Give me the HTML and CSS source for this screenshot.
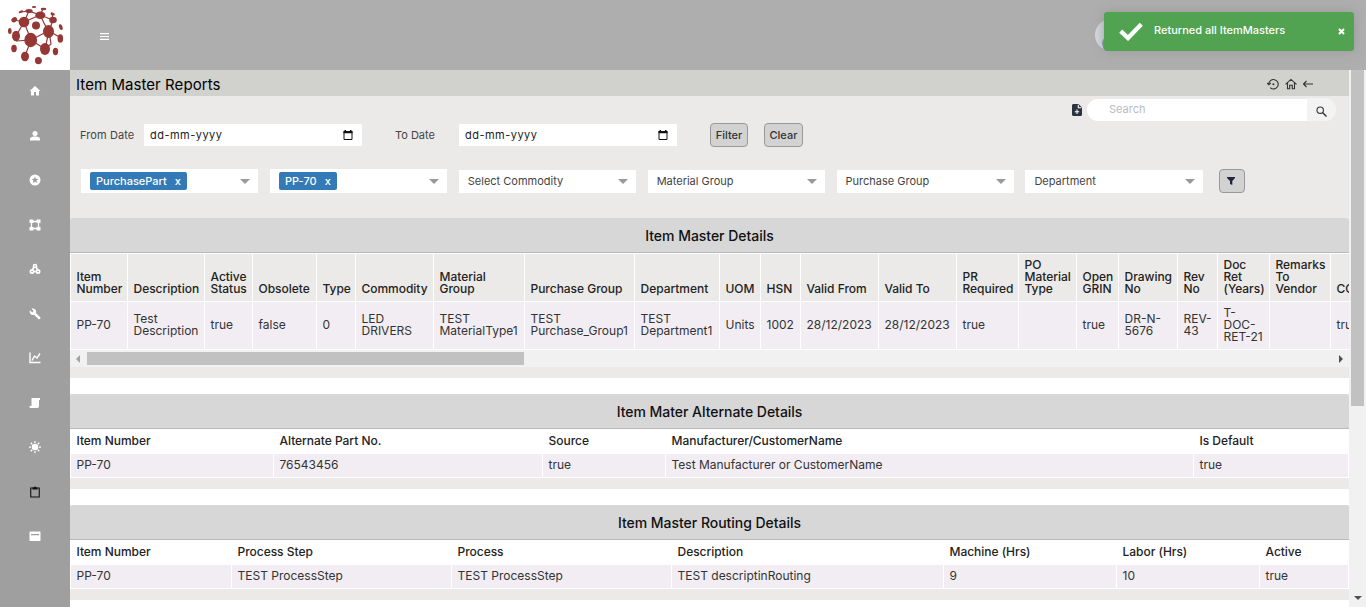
FILE: index.html
```html
<!DOCTYPE html>
<html lang="en">
<head>
<meta charset="utf-8">
<title>Item Master Reports</title>
<link rel="stylesheet" href="styles.css">
</head>
<body>
<header class="topbar">
  <div class="logo">
    <svg width="70" height="70" viewBox="0 0 70 70">
      <g stroke="#953735" stroke-width="1.2" fill="none">
        <path d="M24 22 31 40 48 31 40 15 24 22M24 22 16 36M16 41 31 40 45 49 49 31 53 20 40 15M29 11 40 15 43 9M24 22 14 20M31 40 25 56M49 31 61 38M53 20 52 14M24 22 29 11 21 12M45 49 51 44 49 31"/>
      </g>
      <g fill="#953735">
        <ellipse cx="24" cy="22" rx="5.3" ry="5.3"/><ellipse cx="40.3" cy="15.2" rx="5" ry="3.8"/><circle cx="36" cy="25.5" r="4"/>
        <ellipse cx="48.5" cy="31.5" rx="5.5" ry="6.4"/><ellipse cx="30.7" cy="40" rx="6.4" ry="7.2"/><ellipse cx="53" cy="20" rx="3.8" ry="3.3"/>
        <ellipse cx="16" cy="36" rx="4" ry="5.3"/><ellipse cx="45" cy="49" rx="5" ry="6"/><ellipse cx="25" cy="56.5" rx="4" ry="4.8"/>
        <ellipse cx="38.4" cy="60.6" rx="3.5" ry="3.7"/><ellipse cx="55.5" cy="51.5" rx="2.7" ry="3.7"/><ellipse cx="60.3" cy="38.5" rx="2.8" ry="4.3"/>
        <ellipse cx="14" cy="48.5" rx="2.8" ry="3.7"/><ellipse cx="9.8" cy="31" rx="1.8" ry="2.9"/><ellipse cx="14.3" cy="20" rx="3" ry="2.4" transform="rotate(-35 14 20)"/>
        <ellipse cx="29" cy="11" rx="3.7" ry="2.1"/><ellipse cx="21" cy="11.7" rx="2.4" ry="1.2" transform="rotate(-25 21 12)"/><ellipse cx="34" cy="7" rx="2.2" ry="1"/>
        <ellipse cx="43.5" cy="9" rx="2.8" ry="1.3"/><ellipse cx="52.6" cy="13.7" rx="2.3" ry="1.3" transform="rotate(25 52 14)"/><ellipse cx="60.8" cy="27" rx="1.7" ry="3" transform="rotate(-20 61 27)"/>
      </g>
    </svg>
  </div>
  <svg class="burger" width="9" height="7" viewBox="0 0 9 7"><path d="M0 .6h9M0 3.5h9M0 6.400h9" stroke="#fff" stroke-width="1.200"/></svg>
  <div class="avatar"><svg width="32" height="32" viewBox="0 0 32 32"><path d="M7 24Q8 17 16 17V32H9" fill="#5f7fc0"/></svg></div>
</header>
<div class="toast">
  <svg class="tick" width="24" height="19" viewBox="0 0 24 19"><path d="M1.7 9.2 9 16 22.3 2.3" fill="none" stroke="#fff" stroke-width="4.4"/></svg>
  <span class="toast-text">Returned all ItemMasters</span>
  <svg class="toast-x" width="7" height="7" viewBox="0 0 7 7"><path d="M1 1 6 6M6 1 1 6" stroke="#fff" stroke-width="2"/></svg>
</div>
<div class="shell">
  <nav class="side">
    <span><svg viewBox="0 0 24 24"><path d="M10 21v-7h4v7h6v-9h3L12 2 1 12h3v9z"/></svg></span>
    <span><svg viewBox="0 0 24 24"><circle cx="12" cy="7" r="5"/><path d="M2 21v-3c0-4 6-5 10-5s10 1 10 5v3z"/></svg></span>
    <span><svg viewBox="0 0 24 24"><path fill-rule="evenodd" d="M12 1a11 11 0 1 0 0 22 11 11 0 0 0 0-22zm4.2 17L12 15.400 7.800 18l1.100-4.800-3.700-3.200 4.900-.4L12 5l1.900 4.600 4.900.4-3.700 3.200z"/></svg></span>
    <span><svg viewBox="0 0 24 24"><path d="M5 5h14v14H5z" fill="none" stroke="#fff" stroke-width="2.6"/><path d="M1 1h8v7H1zM15 1h8v7h-8zM1 16h8v7H1zM15 16h8v7h-8z"/></svg></span>
    <span><svg viewBox="0 0 24 24"><g fill="none" stroke="#fff" stroke-width="3.400"><circle cx="12" cy="6" r="3"/><circle cx="6" cy="17" r="3.300"/><circle cx="18" cy="17" r="3.300"/><path d="M10 8 7 13M14 8l3 5M10 17h4"/></g></svg></span>
    <span><svg viewBox="0 0 24 24"><path d="m23 19-9.100-9.100c.9-2.300.4-5-1.500-6.900-2-2-5-2.400-7.400-1.300L9.300 6l-3 3L1.900 4.700C.7 7.100 1.200 10.100 3.200 12.100c1.900 1.900 4.600 2.400 6.900 1.500l9.100 9.100c.4.400 1 .4 1.400 0l2.300-2.300c.5-.4.5-1.100.1-1.400z"/></svg></span>
    <span><svg viewBox="0 0 24 24"><path d="M2 1v20h21M6 17l5-9 5 4 6-9" fill="none" stroke="#fff" stroke-width="2.800"/></svg></span>
    <span><svg viewBox="0 0 24 24"><path d="M5 2h17v4h-2v13a4 4 0 0 1-4 3H4a3 3 0 0 1-3-4h4z"/></svg></span>
    <span><svg viewBox="0 0 24 24"><circle cx="12" cy="12" r="6.500"/><path d="M12 0v4M12 20v4M0 12h4M20 12h4M3.500 3.500l3 3M17.500 17.500l3 3M20.500 3.500l-3 3M6.500 17.500l-3 3" stroke="#fff" stroke-width="2.500"/></svg></span>
    <span><svg viewBox="0 0 24 24"><path d="M3.500 4h17v18h-17z" fill="none" stroke="#111" stroke-width="2.200"/><path d="M7 3h3l1-2h2l1 2h3v4H7z" fill="#111"/></svg></span>
    <span><svg viewBox="0 0 24 24"><path fill-rule="evenodd" d="M2 3h20l1 1v17l-1 1H2l-1-1V4zM4 8v2.500h16V8z"/></svg></span>
  </nav>
  <main class="main">
    <div class="titlebar">
      <h1>Item Master Reports</h1>
      <div class="tools">
        <svg width="12" height="12" viewBox="0 0 12 12"><path d="M1.800 6.500A4.700 4.700 0 1 1 3.200 9.600M0 5l1.800 1.800L3.800 5" fill="none" stroke="#333" stroke-width="1.100"/><circle cx="6.400" cy="6.200" r="1" fill="#333"/></svg>
        <svg width="12" height="12" viewBox="0 0 12 12"><path d="M.5 6.300 6 1.400l5.500 4.900M2.500 5v5.700h2.200V7.200h2.600v3.500h2.200V5" fill="none" stroke="#333" stroke-width="1.100"/></svg>
        <svg width="12" height="12" viewBox="0 0 12 12"><path d="M11 6H1.500M4.500 3l-3 3 3 3" fill="none" stroke="#333" stroke-width="1.100"/></svg>
      </div>
    </div>
    <section class="filters">
      <div class="searchrow">
        <svg class="addfile" width="10" height="12" viewBox="0 0 10 12"><path d="M1 0h5.500L10 3.500V11l-1 1H1l-1-1V1z" fill="#2b3340"/><path d="M6.300.8V3.800h3M5 5.500v4.500M2.800 7.700h4.400" fill="none" stroke="#fff" stroke-width="1.100"/></svg>
        <div class="search">Search</div>
        <div class="searchbtn"><svg width="11" height="11" viewBox="0 0 11 11"><circle cx="4.200" cy="4.200" r="3.200" fill="none" stroke="#333" stroke-width="1.100"/><path d="m6.500 6.500 4 4" stroke="#333" stroke-width="1.400"/></svg></div>
      </div>
      <div class="daterow">
        <label class="lbl-from">From Date</label>
        <div class="date"><span>dd-mm-yyyy</span><svg width="10" height="10" viewBox="0 0 10 10"><path d="M1 1.500h8v8H1z" fill="none" stroke="#111" stroke-width="1"/><path d="M.5 1h9v2.300h-9zM1.500 0h1.500v1H1.500zM7 0h1.500v1H7z" fill="#111"/></svg></div>
        <label class="lbl-to">To Date</label>
        <div class="date"><span>dd-mm-yyyy</span><svg width="10" height="10" viewBox="0 0 10 10"><path d="M1 1.500h8v8H1z" fill="none" stroke="#111" stroke-width="1"/><path d="M.5 1h9v2.300h-9zM1.500 0h1.500v1H1.500zM7 0h1.500v1H7z" fill="#111"/></svg></div>
        <button class="btn btn-filter">Filter</button>
        <button class="btn btn-clear">Clear</button>
      </div>
      <div class="selectrow">
        <div class="select tall"><span class="chip">PurchasePart<b>x</b></span><i></i></div>
        <div class="select tall"><span class="chip">PP-70<b>x</b></span><i></i></div>
        <div class="select"><span>Select Commodity</span><i></i></div>
        <div class="select"><span>Material Group</span><i></i></div>
        <div class="select"><span>Purchase Group</span><i></i></div>
        <div class="select"><span>Department</span><i></i></div>
        <button class="btn btn-funnel"><svg width="8" height="8" viewBox="0 0 8 8"><path d="M0 0h8v1L5.300 4v4L3 7V4L0 1z" fill="#22263a"/></svg></button>
      </div>
    </section>

    <section class="card">
      <h2>Item Master Details</h2>
      <div class="scroller">
        <table class="grid wide">
          <colgroup><col class="w56"><col class="w76"><col class="w47"><col class="w63"><col class="w38"><col class="w77"><col class="w90"><col class="w109"><col class="w84"><col class="w40"><col class="w39"><col class="w77"><col class="w77"><col class="w61"><col class="w57"><col class="w41"><col class="w58"><col class="w39"><col class="w51"><col class="w60"><col class="w80"></colgroup>
          <tr><th>Item Number</th><th>Description</th><th>Active Status</th><th>Obsolete</th><th>Type</th><th>Commodity</th><th>Material<br>Group</th><th>Purchase Group</th><th>Department</th><th>UOM</th><th>HSN</th><th>Valid From</th><th>Valid To</th><th>PR<br>Required</th><th>PO<br>Material<br>Type</th><th>Open<br>GRIN</th><th>Drawing<br>No</th><th>Rev<br>No</th><th>Doc<br>Ret<br>(Years)</th><th>Remarks<br>To<br>Vendor</th><th>COC</th></tr>
          <tr><td>PP-70</td><td>Test<br>Description</td><td>true</td><td>false</td><td>0</td><td>LED<br>DRIVERS</td><td>TEST<br>MaterialType1</td><td>TEST<br>Purchase_Group1</td><td>TEST<br>Department1</td><td>Units</td><td>1002</td><td>28/12/2023</td><td>28/12/2023</td><td>true</td><td></td><td>true</td><td>DR-N-<br>5676</td><td>REV-<br>43</td><td>T-<br>DOC-<br>RET-21</td><td></td><td>true</td></tr>
        </table>
      </div>
      <div class="hbar"><i class="arrow-l"></i><div class="hthumb"></div><i class="arrow-r"></i></div>
    </section>

    <section class="card spaced">
      <h2>Item Mater Alternate Details</h2>
      <table class="grid plain">
        <colgroup><col class="w202"><col class="w268"><col class="w122"><col class="w527"><col class="w154"></colgroup>
        <tr><th>Item Number</th><th>Alternate Part No.</th><th>Source</th><th>Manufacturer/CustomerName</th><th>Is Default</th></tr>
        <tr><td>PP-70</td><td>76543456</td><td>true</td><td>Test Manufacturer or CustomerName</td><td>true</td></tr>
      </table>
    </section>

    <section class="card spaced">
      <h2>Item Master Routing Details</h2>
      <table class="grid plain">
        <colgroup><col class="w160"><col class="w219"><col class="w219"><col class="w271"><col class="w172"><col class="w142"><col class="w88"></colgroup>
        <tr><th>Item Number</th><th>Process Step</th><th>Process</th><th>Description</th><th>Machine (Hrs)</th><th>Labor (Hrs)</th><th>Active</th></tr>
        <tr><td>PP-70</td><td>TEST ProcessStep</td><td>TEST ProcessStep</td><td>TEST descriptinRouting</td><td>9</td><td>10</td><td>true</td></tr>
      </table>
    </section>
    <section class="card spaced"></section>
  </main>
  <div class="vbar"><div class="vthumb"></div><i class="arrow-d"></i></div>
</div>
</body>
</html>
```
FILE: styles.css
```css
* { box-sizing: border-box; }
html, body { margin: 0; height: 607px; overflow: hidden; }
body { font: 400 12px/1 Inter, "Open Sans", sans-serif; color: #333; background: #ebeae8; position: relative; }
svg { display: block; flex: none; }
h1, h2 { margin: 0; }

.topbar { height: 70px; background: #aeaeae; display: flex; align-items: center; }
.logo { width: 70px; height: 70px; background: #fff; }
.burger { margin: 3px 0 0 30px; }
.avatar { width: 32px; height: 32px; border-radius: 50%; background: #d5dae1; margin-left: 986px; overflow: hidden; }
.toast { position: absolute; z-index: 2; left: 1104px; top: 12px; width: 250px; height: 39px; border-radius: 3px; background: #51a351; box-shadow: 0 0 12px #999; display: flex; align-items: center; padding: 0 9px 0 15px; color: #fff; }
.toast-text { font-size: 11px; font-weight: 500; margin: -3px 0 0 11px; flex: 1; white-space: nowrap; }

.shell { display: flex; height: 537px; }
.side { width: 70px; background: #9f9f9f; display: flex; flex-direction: column; }
.side span { height: 44.500px; display: flex; justify-content: center; align-items: center; padding-bottom: 2px; }
.side svg { width: 12px; height: 12px; fill: #fff; }
.main { width: 1279px; overflow: hidden; }

.titlebar { height: 26px; background: #d1d1ce; display: flex; align-items: center; justify-content: space-between; padding: 0 35px 0 6px; }
.titlebar h1 { font-size: 15px; font-weight: 400; letter-spacing: .06px; color: #000; line-height: 26px; padding-top: 3px; }
.tools { display: flex; gap: 5.500px; padding-top: 2px; }

.filters { height: 122px; padding-top: 2px; }
.searchrow { display: flex; height: 23px; justify-content: flex-end; align-items: center; padding-right: 13px; }
.addfile { margin-right: 5px; }
.search { width: 220px; height: 22px; background: #fff; border-radius: 11px 0 0 11px; color: #b9bcc1; font-size: 11px; line-height: 21px; padding-left: 22px; }
.searchbtn { width: 29px; height: 23px; background: #f3f3f3; border-radius: 0 11px 11px 0; display: flex; align-items: center; justify-content: center; padding-top: 3px; }
.daterow { display: flex; align-items: center; height: 24px; margin-top: 2px; padding-left: 10px; color: #444; font-size: 11px; }
.lbl-from { width: 64px; letter-spacing: .1px; }
.lbl-to { width: 64px; margin-left: 33px; }
.date { width: 218px; height: 22px; background: #fff; display: flex; align-items: center; justify-content: space-between; padding: 0 9px 0 6px; color: #222; letter-spacing: .48px; }
.btn { font: 500 11px/1 Inter, sans-serif; color: #333; border: 1px solid #999; border-radius: 4px; background: #d2d2d2; height: 24px; padding: 0; }
.btn-filter { width: 38px; margin-left: 33px; }
.btn-clear { width: 39px; margin-left: 16px; }
.selectrow { display: flex; align-items: center; height: 24px; margin-top: 22px; padding-left: 11px; gap: 11.700px; }
.select { width: 177.200px; height: 23px; background: #fff; display: flex; align-items: center; justify-content: space-between; padding: 1px 8px 0 9px; font-size: 11px; color: #444; }
.select.tall { height: 24px; padding-top: 0; }
.select i { border: 5px solid transparent; border-top-color: #999; border-bottom: 0; }
.chip { height: 18px; background: #337ab7; color: #fff; border-radius: 2px; display: flex; align-items: center; padding: 1px 6px 0; font-weight: 500; }
.chip b { font-weight: 500; margin-left: 8px; }
.btn-funnel { width: 26px; margin-left: 5px; padding-left: 7px; }

.card.spaced { margin-top: 11px; border-top: 16px solid #fff; }
.card h2 { height: 35px; background: #d7d7d7; border-bottom: 1px solid #b9b9b9; border-radius: 3px 3px 0 0; font-size: 14px; font-weight: 500; letter-spacing: -.03px; line-height: 36px; text-align: center; color: #111; }
.scroller { overflow: hidden; }
.grid { table-layout: fixed; border-spacing: 1px; background: #fff; width: 1279px; }
.grid.wide { width: 1342px; }
.grid th, .grid td { padding: 0 0 0 5.500px; text-align: left; font-size: 12px; line-height: 12px; white-space: nowrap; }
.grid th { font-weight: 500; letter-spacing: -.03px; color: #222; }
.grid td { background: #f1edf3; color: #333; vertical-align: middle; }
.wide th { height: 47px; background: #ebeae8; vertical-align: bottom; padding-bottom: 6px; white-space: normal; }
.wide td { height: 47px; padding-bottom: 2px; }
.plain th { height: 23px; padding-bottom: 1px; }
.plain td { height: 23px; padding-bottom: 1px; }
.w38 { width: 38px; } .w39 { width: 39px; } .w40 { width: 40px; } .w41 { width: 41px; } .w47 { width: 47px; }
.w51 { width: 51px; } .w56 { width: 56px; } .w57 { width: 57px; } .w58 { width: 58px; } .w60 { width: 60px; }
.w61 { width: 61px; } .w63 { width: 63px; } .w76 { width: 76px; } .w77 { width: 77px; } .w80 { width: 80px; }
.w84 { width: 84px; } .w88 { width: 88px; } .w90 { width: 90px; } .w109 { width: 109px; } .w122 { width: 122px; }
.w142 { width: 142px; } .w154 { width: 154px; } .w160 { width: 160px; } .w172 { width: 172px; } .w202 { width: 202px; }
.w219 { width: 219px; } .w268 { width: 268px; } .w271 { width: 271px; } .w527 { width: 527px; }

.hbar { height: 17px; background: #f1f1f1; display: flex; align-items: center; padding: 0 6px; }
.hthumb { width: 437px; height: 13px; background: #c1c1c1; margin-left: 7px; }
.arrow-l { border: 4px solid transparent; border-right-color: #a3a3a3; border-left: 0; }
.arrow-r { border: 4px solid transparent; border-left-color: #505050; border-right: 0; margin-left: auto; }
.vbar { width: 17px; background: #f1f1f1; display: flex; flex-direction: column; align-items: center; padding-bottom: 7px; }
.vthumb { width: 13px; height: 336px; background: #c1c1c1; }
.arrow-d { border: 4px solid transparent; border-top-color: #505050; border-bottom: 0; margin-top: auto; }
```
